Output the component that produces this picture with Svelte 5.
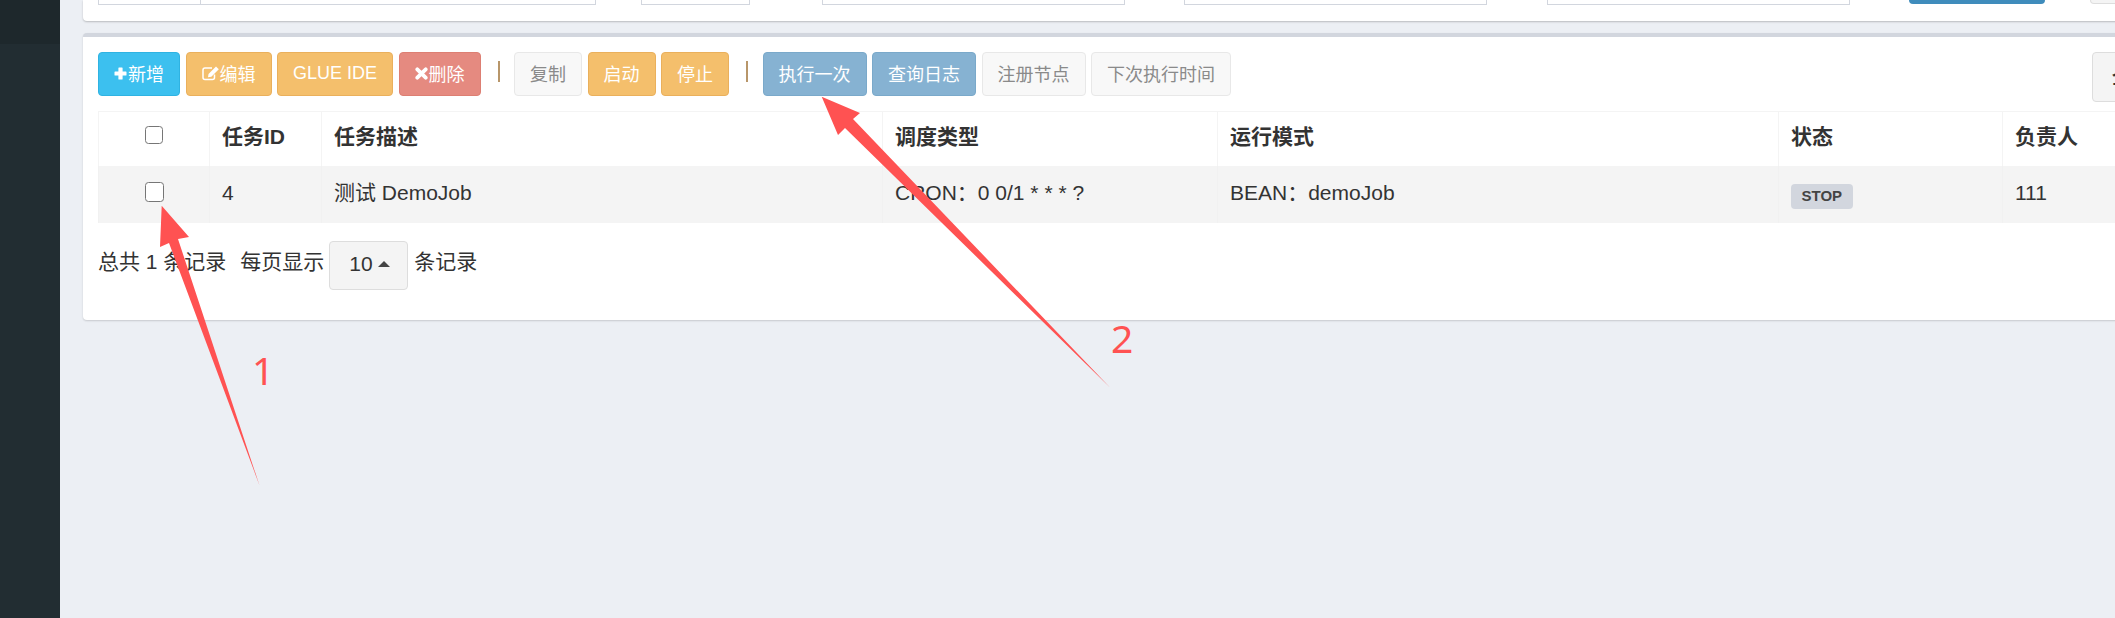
<script>
  const head = ['任务ID', '任务描述', '调度类型', '运行模式', '状态', '负责人'];
</script>

<div class="page">
  <aside class="side"><div class="side-top"></div></aside>
  <main class="main">
    <section class="card-top">
      <div class="fields">
        <div class="f addon"></div><div></div>
        <div class="f"></div><div></div>
        <div class="f"></div><div></div>
        <div class="f"></div><div></div>
        <div class="f"></div><div></div>
        <div class="go"></div><div></div>
        <div class="other"></div>
      </div>
    </section>

    <section class="card">
      <div class="toolbar">
        <button class="btn info">
          <svg class="i13" viewBox="0 0 13 13"><path d="M5 .5h3a.6.6 0 0 1 .6.6V4.400h3.300a.6.6 0 0 1 .6.6v3a.6.6 0 0 1-.6.6H8.600v3.300a.6.6 0 0 1-.6.6H5a.6.6 0 0 1-.6-.6V8.600H1.100a.6.6 0 0 1-.6-.6V5a.6.6 0 0 1 .6-.6h3.300V1.100A.6.6 0 0 1 5 .5z" fill="#fff"/></svg>新增
        </button>
        <button class="btn warn">
          <svg class="i18" viewBox="0 0 18 16"><path d="M12.500 9.500v3a2 2 0 0 1-2 2H3a2 2 0 0 1-2-2V5a2 2 0 0 1 2-2h7" fill="none" stroke="#fff" stroke-width="1.500"/><path d="M6.500 9 14 1.500l2.800 2.800L9.300 11.800 6 12.300z" fill="#fff"/></svg>编辑
        </button>
        <button class="btn warn latin">GLUE IDE</button>
        <button class="btn danger">
          <svg class="i13" viewBox="0 0 13 13"><path d="M2.300 2.300l8.400 8.400M10.700 2.300l-8.400 8.400" stroke="#fff" stroke-width="3.800" stroke-linecap="round"/></svg>删除
        </button>
        <span class="sep"></span>
        <button class="btn plain">复制</button>
        <button class="btn warn">启动</button>
        <button class="btn warn">停止</button>
        <span class="sep"></span>
        <button class="btn primary">执行一次</button>
        <button class="btn primary">查询日志</button>
        <button class="btn plain">注册节点</button>
        <button class="btn plain">下次执行时间</button>
        <button class="btn tool">全部</button>
      </div>

      <table class="grid">
        <colgroup>
          <col class="c1" /><col class="c2" /><col class="c3" /><col class="c4" /><col class="c5" /><col class="c6" /><col class="c7" />
        </colgroup>
        <thead>
          <tr>
            <th class="chk"><input type="checkbox" class="cb head-cb" aria-label="全选" /></th>
            {#each head as h}<th>{h}</th>{/each}
          </tr>
        </thead>
        <tbody>
          <tr>
            <td class="chk"><input type="checkbox" class="cb row-cb" aria-label="选择" /></td>
            <td>4</td>
            <td>测试 DemoJob</td>
            <td>CRON：0 0/1 * * * ?</td>
            <td>BEAN：demoJob</td>
            <td><span class="label">STOP</span></td>
            <td>111</td>
          </tr>
        </tbody>
      </table>

      <div class="pager">
        <span class="total">总共 1 条记录</span>
        <span>每页显示</span>
        <button class="size">10<i class="caret"></i></button>
        <span>条记录</span>
      </div>
    </section>
  </main>

  <svg class="marks" viewBox="0 0 2115 618" aria-hidden="true">
    <polygon points="161.700,205.700 189,237 178,239 259.500,485.500 169,243 160,247" />
    <polygon points="821.700,96.700 860,113 853,119 1110,387.500 845,128 838,135" />
    <text x="252" y="385">1</text>
    <text x="1111" y="353">2</text>
  </svg>
</div>

<style>
  :global(body) {
    margin: 0;
    background: #eceff4;
  }
  .page {
    position: relative;
    display: flex;
    width: 2115px;
    height: 618px;
    overflow: hidden;
    background: #eceff4;
    font-family: "Liberation Sans", "Noto Sans CJK SC", sans-serif;
    color: #333;
  }
  .side {
    flex: 0 0 60px;
    background: #222d32;
  }
  .side-top {
    height: 44px;
    background: #1e282c;
  }
  .main {
    flex: 0 0 2100px;
    margin-left: 23px;
    display: flex;
    flex-direction: column;
    align-items: stretch;
  }
  .card-top {
    height: 21px;
    padding-left: 15px;
    background: #fff;
    border-radius: 0 0 4px 4px;
    box-shadow: 0 1px 2px rgba(0, 0, 0, 0.22);
  }
  .fields {
    display: grid;
    grid-template-columns: 498px 45px 109px 72px 303px 59px 303px 60px 303px 59px 136px 45px 100px;
    height: 5px;
  }
  .f {
    position: relative;
    border: 1px solid #d2d6de;
    border-top: 0;
  }
  .addon::before {
    content: "";
    display: block;
    width: 101px;
    height: 100%;
    border-right: 1px solid #d2d6de;
  }
  .go {
    height: 4px;
    background: #3f8cbc;
    border-radius: 0 0 4px 4px;
  }
  .other {
    height: 3px;
    background: #f4f4f4;
    border: 1px solid #ddd;
    border-top: 0;
    border-radius: 0 0 4px 4px;
  }
  .card {
    margin-top: 12px;
    height: 287px;
    box-sizing: border-box;
    padding: 15px 15px 0;
    background: #fff;
    border-top: 4px solid #d2d6de;
    border-radius: 4px;
    box-shadow: 0 1px 2px rgba(0, 0, 0, 0.16);
  }
  .toolbar {
    display: flex;
    align-items: flex-start;
    gap: 5.500px;
    height: 50px;
    margin-bottom: 9px;
  }
  .btn {
    display: inline-flex;
    align-items: center;
    box-sizing: border-box;
    height: 44px;
    padding: 0 15px 3px;
    border: 1px solid;
    border-radius: 4px;
    font: inherit;
    font-size: 18px;
    white-space: nowrap;
    color: #fff;
  }
  .latin {
    padding-bottom: 1px;
  }
  .info {
    background: #3cc0ef;
    border-color: #2fb3e2;
  }
  .warn {
    background: #f4bf6c;
    border-color: #eab05c;
  }
  .danger {
    background: #e58a80;
    border-color: #dd7f73;
  }
  .primary {
    background: #86b2d2;
    border-color: #7aa9ca;
  }
  .plain {
    background: #f8f8f8;
    border-color: #e8e8e8;
    color: #8a8a8a;
  }
  .tool {
    height: 50px;
    margin-left: 855.500px;
    padding: 0 19px 3px;
    font-weight: 700;
    background: #f4f4f4;
    border-color: #ddd;
    color: #333;
  }
  .sep {
    flex: 0 0 2px;
    height: 21px;
    margin: 9px 9px 0 11.500px;
    background: #b8966a;
  }
  .i13 {
    width: 13px;
    height: 13px;
    flex: none;
    margin-top: 1px;
    margin-right: 1px;
  }
  .i18 {
    width: 18px;
    height: 16px;
    flex: none;
  }
  .grid {
    width: 2070px;
    table-layout: fixed;
    border-collapse: collapse;
    font-size: 21px;
  }
  .c1 { width: 111px; }
  .c2 { width: 112px; }
  .c3 { width: 561px; }
  .c4 { width: 335px; }
  .c5 { width: 561px; }
  .c6 { width: 224px; }
  .c7 { width: 166px; }
  th,
  td {
    box-sizing: border-box;
    text-align: left;
    white-space: nowrap;
    border: 1px solid #f4f4f4;
    border-bottom: 0;
  }
  th {
    height: 54px;
    padding: 0 12px 7px;
    font-weight: 700;
  }
  td {
    height: 57px;
    padding: 0 12px 2px;
    line-height: 30px;
    background: #f4f4f4;
    border-color: #f1f1f1;
    border-top: 0;
  }
  .chk {
    text-align: center;
  }
  .cb {
    appearance: none;
    display: inline-block;
    box-sizing: border-box;
    margin: 0;
    vertical-align: middle;
    background: #fff;
    border: 1.500px solid #767676;
    border-radius: 3.500px;
  }
  .head-cb {
    width: 18px;
    height: 18px;
    margin-bottom: 3px;
    border-width: 1px;
  }
  .row-cb {
    width: 19px;
    height: 20px;
    margin-bottom: 5px;
  }
  .label {
    display: inline-block;
    margin-top: 6px;
    padding: 0 10.500px;
    height: 25px;
    line-height: 24px;
    font-size: 15px;
    font-weight: 700;
    color: #444;
    background: #d2d6de;
    border-radius: 4px;
    vertical-align: middle;
  }
  .pager {
    display: flex;
    align-items: flex-start;
    margin-top: 18px;
    font-size: 21px;
    line-height: 42px;
    color: #333;
  }
  .total {
    margin-right: 14px;
  }
  .size {
    display: inline-flex;
    align-items: center;
    box-sizing: border-box;
    width: 79px;
    height: 49px;
    margin: 0 6px 0 5px;
    padding: 0 0 2px 19px;
    font: inherit;
    font-size: 21px;
    color: #333;
    background: #f4f4f4;
    border: 1px solid #ddd;
    border-radius: 4px;
  }
  .caret {
    width: 0;
    height: 0;
    margin-left: 5px;
    border: 6px solid transparent;
    border-top: 0;
    border-bottom: 6px solid #444;
  }
  .marks {
    position: absolute;
    inset: 0;
    width: 2115px;
    height: 618px;
    pointer-events: none;
  }
  .marks polygon {
    fill: #ff5252;
  }
  .marks text {
    fill: #ff5252;
    font-family: "Noto Sans", sans-serif;
    font-size: 39px;
  }
</style>
